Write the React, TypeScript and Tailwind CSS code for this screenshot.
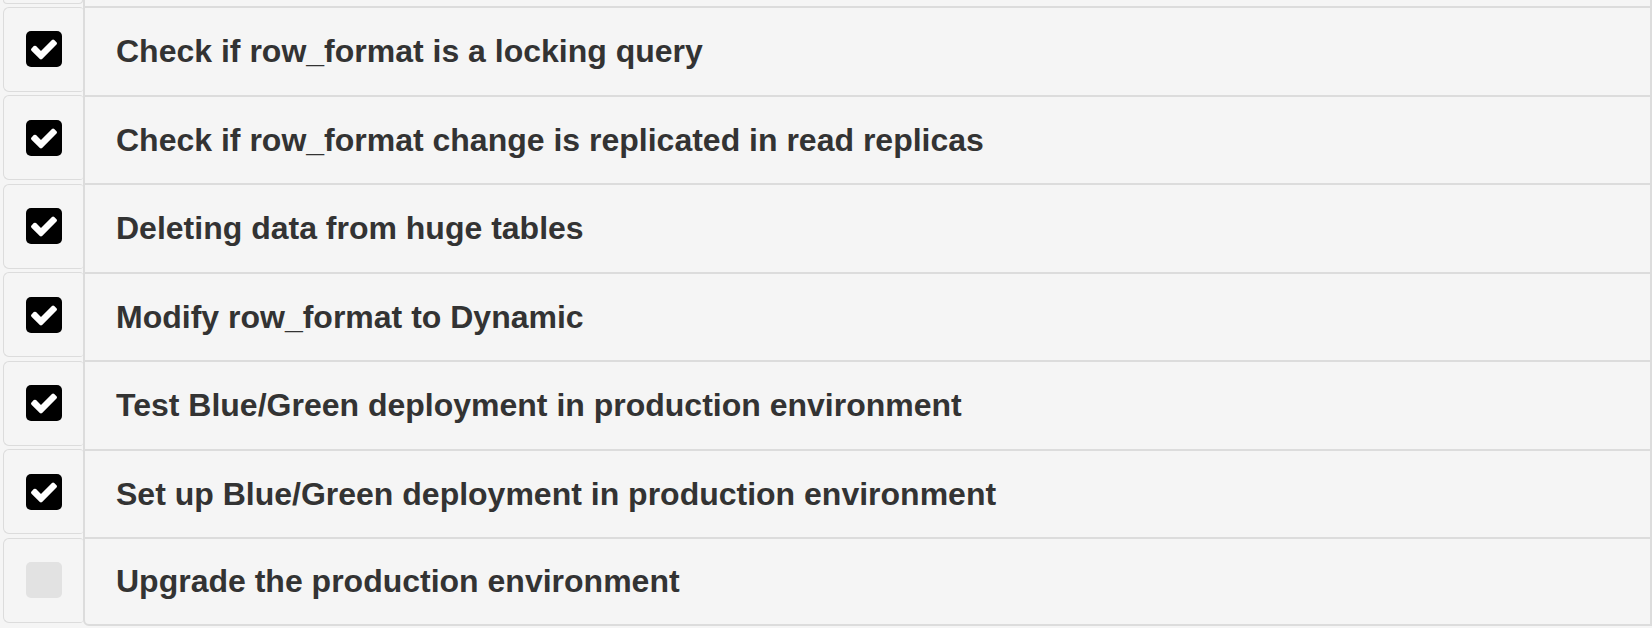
import React from "react";

const items: { text: string; done: boolean }[] = [
  { text: "Check if row_format is a locking query", done: true },
  { text: "Check if row_format change is replicated in read replicas", done: true },
  { text: "Deleting data from huge tables", done: true },
  { text: "Modify row_format to Dynamic", done: true },
  { text: "Test Blue/Green deployment in production environment", done: true },
  { text: "Set up Blue/Green deployment in production environment", done: true },
  { text: "Upgrade the production environment", done: false },
];

function Box({ done }: { done: boolean }) {
  if (!done) {
    return <div className="w-[36px] h-[36px] rounded-[5px] bg-[#e2e2e2]" />;
  }
  return (
    <div className="w-[36px] h-[36px] rounded-[5px] bg-black flex items-center justify-center">
      <svg viewBox="0 0 1792 1792" className="w-[30px] h-[30px]" fill="#ffffff">
        <path d="M1671 566q0 40-28 68l-724 724-136 136q-28 28-68 28t-68-28l-136-136-362-362q-28-28-28-68t28-68l136-136q28-28 68-28t68 28l294 295 656-657q28-28 68-28t68 28l136 136q28 28 28 68z" />
      </svg>
    </div>
  );
}

export default function App() {
  return (
    <div
      className="w-[1652px] h-[628px] overflow-hidden bg-[#f5f5f5]"
      style={{ fontFamily: '"Liberation Sans", Arial, Helvetica, sans-serif' }}
    >
      {/* tail of the previous row */}
      <div className="flex h-[6px]">
        <div className="ml-[3px] w-[80px] h-[3.5px] border-[1.5px] border-t-0 border-[#dcdcdc] rounded-b-[6px] bg-[#f5f5f5]" />
        <div className="flex-1 border-l-2 border-r-2 border-[#dcdcdc] bg-[#f5f5f5]" />
      </div>
      {items.map((it, i) => {
        const last = i === items.length - 1;
        return (
          <div key={i} className="flex h-[88.5px]">
            <div className="ml-[3px] w-[80px] pt-[0.5px] pb-[3px]">
              <div className="h-full border-[1.5px] border-r-0 border-[#dcdcdc] rounded-l-[6px] rounded-r-[3px] bg-[#f5f5f5] flex items-center justify-center">
                <Box done={it.done} />
              </div>
            </div>
            <div
              className={
                last
                  ? "flex-1 border-t-2 border-b-2 border-l-2 border-r-2 border-[#dcdcdc] rounded-bl-[6px] bg-[#f5f5f5] flex items-center pl-[31px]"
                  : "flex-1 border-t-2 border-l-2 border-r-2 border-[#dcdcdc] bg-[#f5f5f5] flex items-center pl-[31px]"
              }
            >
              <span className="text-[32px] font-bold text-[#333333] leading-none">{it.text}</span>
            </div>
          </div>
        );
      })}
    </div>
  );
}
